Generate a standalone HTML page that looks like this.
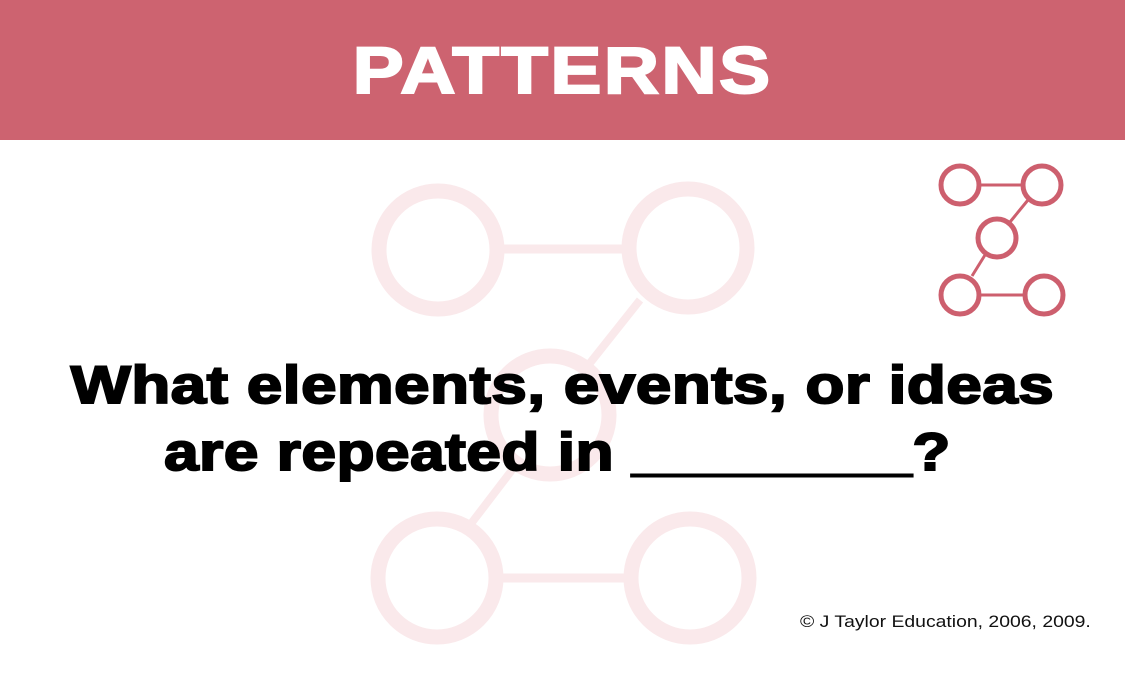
<!DOCTYPE html>
<html><head><meta charset="utf-8"><style>
body{margin:0;width:1125px;height:675px;background:#fff;position:relative;overflow:hidden;font-family:"Liberation Sans",sans-serif}
.hdr{position:absolute;left:0;top:0;width:1125px;height:140px;background:#cd6370}
.t{position:absolute;left:0;width:1125px;text-align:center;font-weight:bold;white-space:nowrap}
</style></head><body>
<div class="hdr"></div>
<div class="t" style="top:32px;left:0;font-size:66px;color:#fff;letter-spacing:2px;-webkit-text-stroke:2px #fff;transform:scaleX(1.16)">PATTERNS</div>
<svg style="position:absolute;left:0;top:0" width="1125" height="675">
<g stroke="#fae9eb" fill="none">
<line x1="504" y1="249" x2="622" y2="249" stroke-width="9"/>
<line x1="503" y1="578" x2="624" y2="578" stroke-width="9"/>
<line x1="640" y1="300" x2="590" y2="363" stroke-width="8"/>
<line x1="512" y1="470" x2="470" y2="525" stroke-width="8"/>
<g stroke-width="15">
<circle cx="438" cy="250" r="59"/><circle cx="688" cy="248" r="59"/>
<circle cx="550" cy="415" r="59"/>
<circle cx="437" cy="578" r="59"/><circle cx="690" cy="578" r="59"/>
</g></g>
<g stroke="#cd5f6e" fill="none">
<line x1="980" y1="185" x2="1022" y2="185" stroke-width="3"/>
<line x1="980" y1="295" x2="1024" y2="295" stroke-width="3"/>
<line x1="1028" y1="200" x2="1010" y2="222" stroke-width="3"/>
<line x1="985" y1="255" x2="972" y2="276" stroke-width="3"/>
<g stroke-width="5">
<circle cx="960" cy="185" r="19"/><circle cx="1042" cy="185" r="19"/>
<circle cx="997" cy="238" r="19"/>
<circle cx="960" cy="295" r="19"/><circle cx="1044" cy="295" r="19"/>
</g></g>
</svg>
<div class="t" style="top:355px;left:0;font-size:53px;color:#000;-webkit-text-stroke:2px #000;letter-spacing:0.5px;transform:scaleX(1.2)">What elements, events, or ideas</div>
<div class="t" style="top:422px;left:-5px;font-size:53px;color:#000;-webkit-text-stroke:2px #000;letter-spacing:0.5px;transform:scaleX(1.17)">are repeated in ________?</div>
<div style="position:absolute;left:800px;top:612px;font-size:17px;color:#111;transform:scaleX(1.14);transform-origin:left">© J Taylor Education, 2006, 2009.</div>
</body></html>
